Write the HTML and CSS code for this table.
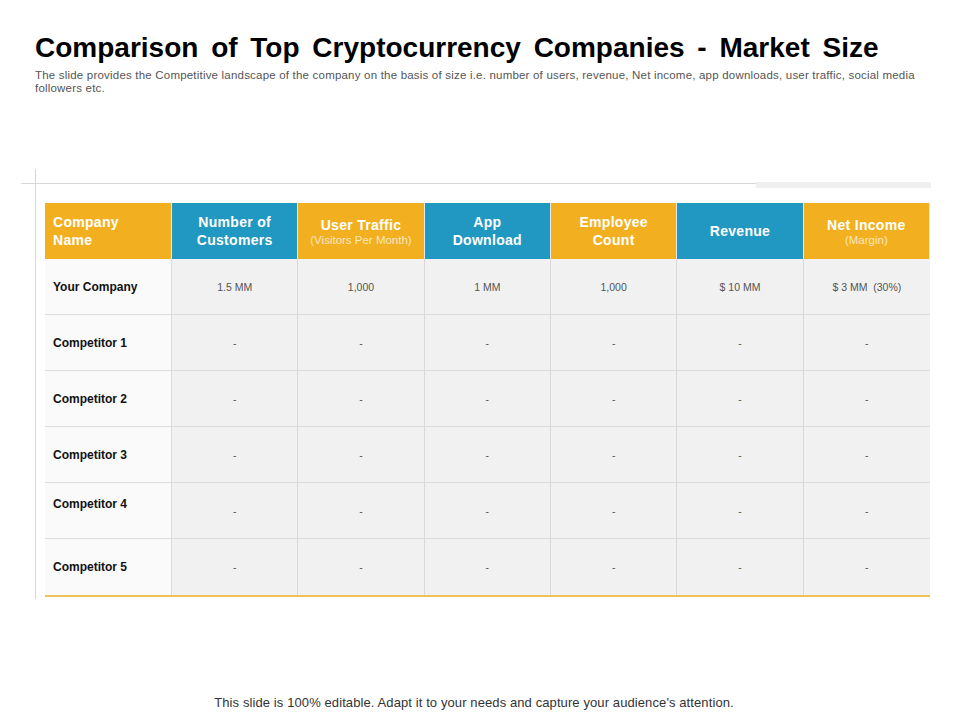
FILE: index.html
```html
<!DOCTYPE html>
<html>
<head>
<meta charset="utf-8">
<link rel="stylesheet" href="styles.css">
</head>
<body>
<div class="slide">
  <h1 class="title">Comparison of Top Cryptocurrency Companies - Market Size</h1>
  <p class="subtitle">The slide provides the Competitive landscape of the company on the basis of size i.e. number of users, revenue, Net income, app downloads, user traffic, social media followers etc.</p>
  <div class="frame">
    <div class="rule">
      <div class="rule-line"></div>
      <div class="rule-bar"></div>
    </div>
    <div class="table">
      <div class="th orange left">Company<br>Name</div>
      <div class="th blue">Number of<br>Customers</div>
      <div class="th orange">User Traffic<span class="sub">(Visitors Per Month)</span></div>
      <div class="th blue">App<br>Download</div>
      <div class="th orange">Employee<br>Count</div>
      <div class="th blue">Revenue</div>
      <div class="th orange">Net Income<span class="sub">(Margin)</span></div>

      <div class="name">Your Company</div>
      <div class="cell">1.5 MM</div>
      <div class="cell">1,000</div>
      <div class="cell">1 MM</div>
      <div class="cell">1,000</div>
      <div class="cell">$ 10 MM</div>
      <div class="cell">$ 3 MM&nbsp; (30%)</div>

      <div class="name">Competitor 1</div>
      <div class="cell">-</div><div class="cell">-</div><div class="cell">-</div><div class="cell">-</div><div class="cell">-</div><div class="cell">-</div>

      <div class="name">Competitor 2</div>
      <div class="cell">-</div><div class="cell">-</div><div class="cell">-</div><div class="cell">-</div><div class="cell">-</div><div class="cell">-</div>

      <div class="name">Competitor 3</div>
      <div class="cell">-</div><div class="cell">-</div><div class="cell">-</div><div class="cell">-</div><div class="cell">-</div><div class="cell">-</div>

      <div class="name top">Competitor 4</div>
      <div class="cell">-</div><div class="cell">-</div><div class="cell">-</div><div class="cell">-</div><div class="cell">-</div><div class="cell">-</div>

      <div class="name last">Competitor 5</div>
      <div class="cell last">-</div><div class="cell last">-</div><div class="cell last">-</div><div class="cell last">-</div><div class="cell last">-</div><div class="cell last">-</div>
    </div>
  </div>
  <p class="footer">This slide is 100% editable. Adapt it to your needs and capture your audience's attention.</p>
</div>
</body>
</html>
```
FILE: styles.css
```css
html, body {
  margin: 0;
  padding: 0;
  background: #ffffff;
}
.slide {
  width: 960px;
  height: 720px;
  position: relative;
  font-family: "Liberation Sans", Arial, sans-serif;
  box-sizing: border-box;
  padding-top: 30px;
}
.title {
  margin: 0 0 0 35px;
  font-size: 28px;
  line-height: 36px;
  font-weight: bold;
  color: #000;
  word-spacing: 5px;
}
.subtitle {
  margin: 3px 30px 0 35px;
  font-size: 11.5px;
  line-height: 13px;
  color: #555;
  letter-spacing: 0.2px;
}
.frame {
  margin: 74px 0 0 35px;
  width: 895px;
  border-left: 1px solid #d6d6d6;
  padding-top: 13px;
  padding-bottom: 2px;
}
.rule {
  display: flex;
  align-items: flex-start;
  height: 6px;
}
.rule-line {
  margin-left: -15px;
  margin-top: 1px;
  width: 735px;
  height: 1px;
  background: #d8d8d8;
}
.rule-bar {
  width: 175px;
  height: 6px;
  background: #efefef;
}
.table {
  margin: 15px 0 0 9px;
  width: 885px;
  display: grid;
  grid-template-columns: 127px repeat(6, 1fr);
  grid-template-rows: repeat(7, 56px);
  border-bottom: 2px solid #f0c060;
}
.th {
  display: flex;
  flex-direction: column;
  align-items: center;
  justify-content: center;
  text-align: center;
  color: #fff;
  font-weight: bold;
  font-size: 14px;
  line-height: 18px;
  letter-spacing: 0.3px;
  border-right: 1px solid #e8e8e8;
}
.th:last-child { border-right: none; }
.th.left {
  align-items: flex-start;
  text-align: left;
  padding-left: 8px;
}
.orange { background: #f2b021; }
.blue { background: #2198c1; }
.sub {
  display: block;
  font-weight: normal;
  font-size: 11.5px;
  line-height: 12px;
  letter-spacing: 0;
  color: #fbe6bd;
}
.name {
  display: flex;
  align-items: center;
  padding-left: 8px;
  font-size: 12px;
  font-weight: bold;
  color: #111;
  background: #fafafa;
  border-bottom: 1px solid #dcdcdc;
  border-right: 1px solid #dcdcdc;
}
.name.top {
  align-items: flex-start;
  padding-top: 14px;
  box-sizing: border-box;
}
.cell {
  display: flex;
  align-items: center;
  justify-content: center;
  font-size: 10.5px;
  color: #555;
  background: #f1f1f1;
  border-bottom: 1px solid #dcdcdc;
  border-right: 1px solid #d8d8d8;
}
.cell:nth-child(7n) { border-right: none; }
.last { border-bottom: none; }
.footer {
  position: absolute;
  left: 0;
  right: 0;
  top: 696px;
  margin: 0;
  text-align: center;
  font-size: 13px;
  line-height: 14px;
  letter-spacing: 0.1px;
  color: #333;
  padding-right: 12px;
}
```
